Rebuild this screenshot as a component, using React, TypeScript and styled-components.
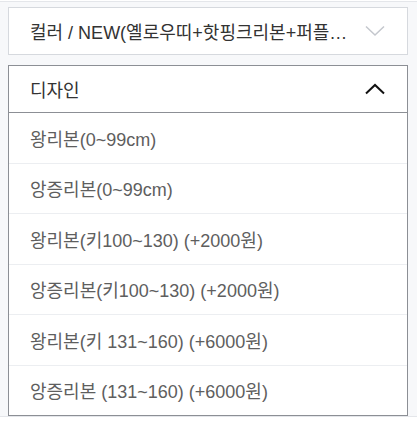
import React from 'react'
import styled, { createGlobalStyle } from 'styled-components'

const GlobalStyle = createGlobalStyle`
  html, body {
    margin: 0;
    padding: 0;
    background: #ffffff;
  }
  body {
    font-family: 'Liberation Sans', 'Noto Sans CJK KR', sans-serif;
  }
`

const Page = styled.div`
  margin-top: 1px;
  border-top: 1px solid #e4e6ea;
  border-bottom: 1px solid #e4e6ea;
  background: #f7f8fa;
  padding: 5px 9px 0 8px;
  display: flex;
  flex-direction: column;
  gap: 10px;
`

const Select = styled.div<{ open?: boolean }>`
  background: #fff;
  border: 1px solid ${({ open }) => (open ? '#8c8f95' : '#d6d9de')};
  display: flex;
  flex-direction: column;
`

const Head = styled.div<{ open?: boolean }>`
  height: 46px;
  display: flex;
  align-items: center;
  gap: 16px;
  padding: 0 21px 0 21px;
  border-bottom: ${({ open }) => (open ? '1px solid #8c8f95' : 'none')};
`

const Label = styled.span`
  flex: 1;
  min-width: 0;
  font-size: 18px;
  color: #333;
  white-space: nowrap;
  overflow: hidden;
  text-overflow: ellipsis;
`

const Option = styled.div`
  height: 49.5px;
  display: flex;
  align-items: center;
  padding: 0 21px;
  font-size: 18px;
  color: #5e5e5e;
  border-bottom: 1px solid #eceef1;

  &:last-child {
    border-bottom: none;
  }
`

function Chevron({ up, color, width }: { up?: boolean; color: string; width: number }) {
  return (
    <svg width="22" height="12" viewBox="0 0 22 12" style={{ flexShrink: 0 }}>
      <path
        d={up ? 'M2 10.5 L11 2 L20 10.5' : 'M2 1.5 L11 10 L20 1.5'}
        fill="none"
        stroke={color}
        strokeWidth={width}
      />
    </svg>
  )
}

const options = [
  '왕리본(0~99cm)',
  '앙증리본(0~99cm)',
  '왕리본(키100~130) (+2000원)',
  '앙증리본(키100~130) (+2000원)',
  '왕리본(키 131~160) (+6000원)',
  '앙증리본 (131~160) (+6000원)',
]

export default function App() {
  return (
    <>
      <GlobalStyle />
      <Page>
        <Select>
          <Head>
            <Label>컬러 / NEW(옐로우띠+핫핑크리본+퍼플리본+블루리본)</Label>
            <Chevron color="#c4c7cd" width={1.5} />
          </Head>
        </Select>
        <Select open>
          <Head open>
            <Label>디자인</Label>
            <Chevron up color="#111" width={2} />
          </Head>
          {options.map((o) => (
            <Option key={o}>{o}</Option>
          ))}
        </Select>
      </Page>
    </>
  )
}
